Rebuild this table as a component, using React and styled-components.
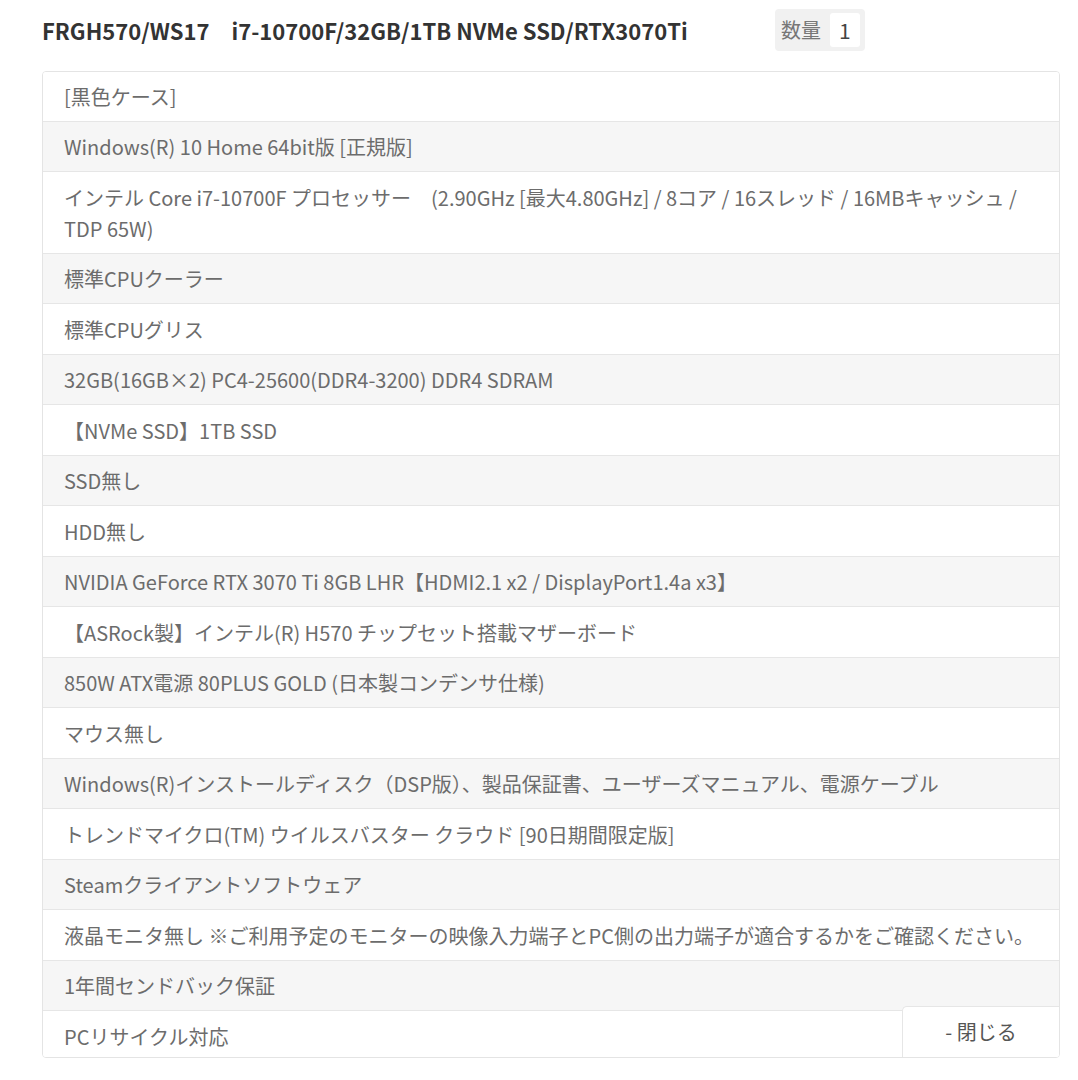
import React from "react";
import styled, {createGlobalStyle} from "styled-components";

const GlobalStyle = createGlobalStyle`
  body {
    margin: 0;
    background: #ffffff;
    font-family: "Noto Sans CJK JP", "Noto Sans", sans-serif;
  }
`

const Page = styled.div`
  width: 1078px;
  padding: 8px 20px 0 42px;
  box-sizing: border-box;
`

const Header = styled.div`
  display: flex;
  align-items: center;
  height: 43px;
`

const Title = styled.h1`
  margin: 0;
  font-size: 22px;
  font-weight: 700;
  color: #333333;
  white-space: pre;
  width: 733px;
`

const Quantity = styled.div`
  display: flex;
  align-items: center;
  gap: 9px;
  height: 42px;
  box-sizing: border-box;
  background: #f1f1f1;
  border-radius: 4px;
  padding: 4px 5px 4px 6px;
  font-size: 20px;
  color: #777777;
`

const QuantityValue = styled.span`
  background: #ffffff;
  border-radius: 3px;
  padding: 0 9px;
  line-height: 34px;
  font-size: 21px;
  color: #444444;
`

const Card = styled.div`
  position: relative;
  margin-top: 20px;
  width: 1016px;
  border: 1px solid #e4e4e4;
  border-radius: 4px;
  overflow: hidden;
`

const SpecRow = styled.div`
  padding: ${props => props.first ? '8.5px' : '9.25px'} 8px ${props => props.last ? '5px' : '9.25px'} 21px;
  font-size: 20px;
  line-height: 31px;
  color: #6c6c6c;
  background: ${props => props.striped ? '#f6f6f6' : '#ffffff'};
  border-top: ${props => props.first ? 'none' : '1px solid #e6e6e6'};
`

const CloseButton = styled.button`
  position: absolute;
  right: 0;
  bottom: 0;
  width: 157px;
  height: 51px;
  background: #ffffff;
  border: 1px solid #e6e6e6;
  border-right: none;
  border-bottom: none;
  border-top-left-radius: 5px;
  font-family: inherit;
  font-size: 20px;
  color: #555555;
  cursor: pointer;
`

const specs = [
    "[黒色ケース]",
    "Windows(R) 10 Home 64bit版 [正規版]",
    "インテル Core i7-10700F プロセッサー　(2.90GHz [最大4.80GHz] / 8コア / 16スレッド / 16MBキャッシュ / TDP 65W)",
    "標準CPUクーラー",
    "標準CPUグリス",
    "32GB(16GB×2) PC4-25600(DDR4-3200) DDR4 SDRAM",
    "【NVMe SSD】1TB SSD",
    "SSD無し",
    "HDD無し",
    "NVIDIA GeForce RTX 3070 Ti 8GB LHR【HDMI2.1 x2 / DisplayPort1.4a x3】",
    "【ASRock製】インテル(R) H570 チップセット搭載マザーボード",
    "850W ATX電源 80PLUS GOLD (日本製コンデンサ仕様)",
    "マウス無し",
    "Windows(R)インストールディスク（DSP版）、製品保証書、ユーザーズマニュアル、電源ケーブル",
    "トレンドマイクロ(TM) ウイルスバスター クラウド [90日期間限定版]",
    "Steamクライアントソフトウェア",
    "液晶モニタ無し ※ご利用予定のモニターの映像入力端子とPC側の出力端子が適合するかをご確認ください。",
    "1年間センドバック保証",
    "PCリサイクル対応",
]

export default function App() {
    return (
        <Page>
            <GlobalStyle/>
            <Header>
                <Title>{"FRGH570/WS17　i7-10700F/32GB/1TB NVMe SSD/RTX3070Ti"}</Title>
                <Quantity>
                    数量
                    <QuantityValue>1</QuantityValue>
                </Quantity>
            </Header>
            <Card>
                {specs.map((text, i) => (
                    <SpecRow
                        key={i}
                        first={i === 0}
                        last={i === specs.length - 1}
                        striped={i % 2 === 1}
                    >
                        {text}
                    </SpecRow>
                ))}
                <CloseButton>- 閉じる</CloseButton>
            </Card>
        </Page>
    )
}
